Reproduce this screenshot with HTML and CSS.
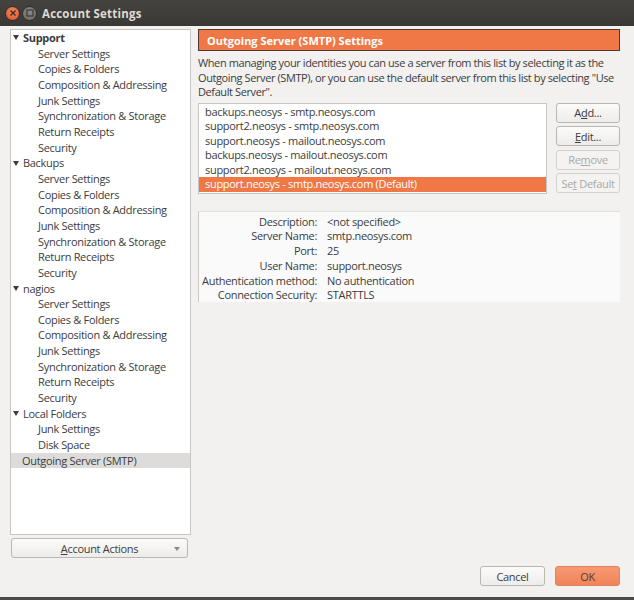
FILE: index.html
```html
<!DOCTYPE html>
<html>
<head>
<meta charset="utf-8">
<link rel="stylesheet" href="styles.css">
</head>
<body>
<div class="window">
  <div class="titlebar">
    <div class="wbtns">
      <span class="wb close"><svg width="8" height="8" viewBox="0 0 8 8"><path d="M1.5 1.5L6.5 6.5M6.5 1.5L1.5 6.5" stroke="#3a2a22" stroke-width="1.4"/></svg></span>
      <span class="wb max"><svg width="8" height="8" viewBox="0 0 8 8"><rect x="1" y="1" width="6" height="6" fill="none" stroke="#3a3935" stroke-width="1.2"/></svg></span>
    </div>
    <div class="title">Account Settings</div>
  </div>
  <div class="content">
    <div class="sidebar">
      <div class="tree">
        <div class="row top"><span class="tw"></span><b>Support</b></div>
        <div class="row sub">Server Settings</div>
        <div class="row sub">Copies &amp; Folders</div>
        <div class="row sub">Composition &amp; Addressing</div>
        <div class="row sub">Junk Settings</div>
        <div class="row sub">Synchronization &amp; Storage</div>
        <div class="row sub">Return Receipts</div>
        <div class="row sub">Security</div>
        <div class="row top"><span class="tw"></span>Backups</div>
        <div class="row sub">Server Settings</div>
        <div class="row sub">Copies &amp; Folders</div>
        <div class="row sub">Composition &amp; Addressing</div>
        <div class="row sub">Junk Settings</div>
        <div class="row sub">Synchronization &amp; Storage</div>
        <div class="row sub">Return Receipts</div>
        <div class="row sub">Security</div>
        <div class="row top"><span class="tw"></span>nagios</div>
        <div class="row sub">Server Settings</div>
        <div class="row sub">Copies &amp; Folders</div>
        <div class="row sub">Composition &amp; Addressing</div>
        <div class="row sub">Junk Settings</div>
        <div class="row sub">Synchronization &amp; Storage</div>
        <div class="row sub">Return Receipts</div>
        <div class="row sub">Security</div>
        <div class="row top"><span class="tw"></span>Local Folders</div>
        <div class="row sub">Junk Settings</div>
        <div class="row sub">Disk Space</div>
        <div class="row top sel">Outgoing Server (SMTP)</div>
      </div>
      <div class="btn actions"><span><u>A</u>ccount Actions</span><span class="dd"></span></div>
    </div>
    <div class="main">
      <div class="header">Outgoing Server (SMTP) Settings</div>
      <p class="desc">When managing your identities you can use a server from this list by selecting it as the<br>Outgoing Server (SMTP), or you can use the default server from this list by selecting "Use<br>Default Server".</p>
      <div class="listarea">
        <div class="list">
          <div class="item">backups.neosys - smtp.neosys.com</div>
          <div class="item">support2.neosys - smtp.neosys.com</div>
          <div class="item">support.neosys - mailout.neosys.com</div>
          <div class="item">backups.neosys - mailout.neosys.com</div>
          <div class="item">support2.neosys - mailout.neosys.com</div>
          <div class="item selitem">support.neosys - smtp.neosys.com (Default)</div>
        </div>
        <div class="sidebtns">
          <div class="btn"><span>A<u>d</u>d...</span></div>
          <div class="btn"><span><u>E</u>dit...</span></div>
          <div class="btn dis"><span>Re<u>m</u>ove</span></div>
          <div class="btn dis"><span>Se<u>t</u> Default</span></div>
        </div>
      </div>
      <div class="details">
        <div class="lbl">Description:</div><div class="val">&lt;not specified&gt;</div>
        <div class="lbl">Server Name:</div><div class="val">smtp.neosys.com</div>
        <div class="lbl">Port:</div><div class="val">25</div>
        <div class="lbl">User Name:</div><div class="val">support.neosys</div>
        <div class="lbl">Authentication method:</div><div class="val">No authentication</div>
        <div class="lbl">Connection Security:</div><div class="val">STARTTLS</div>
      </div>
    </div>
  </div>
  <div class="footer">
    <div class="btn fbtn">Cancel</div>
    <div class="btn fbtn ok">OK</div>
  </div>
</div>
</body>
</html>
```
FILE: styles.css
```css
html, body {
  margin: 0;
  padding: 0;
  background: #3a3a3a;
}
body {
  font-family: "Open Sans", "DejaVu Sans", sans-serif;
  font-size: 11px;
  letter-spacing: -0.3px;
  color: #3c3c3c;
}
.window {
  width: 634px;
  height: 597px;
  background: #f2f1f0;
  display: flex;
  flex-direction: column;
  border-bottom: 3px solid #4a4a48;
}
.titlebar {
  height: 26px;
  background: linear-gradient(#44433f, #393834);
  display: flex;
  align-items: center;
  flex-shrink: 0;
}
.wbtns {
  display: flex;
  gap: 2px;
  margin-left: 5px;
}
.wb {
  width: 13px;
  height: 13px;
  border-radius: 50%;
  display: flex;
  align-items: center;
  justify-content: center;
}
.wb.close {
  background: radial-gradient(circle at 50% 35%, #f58a5c, #d9532a);
  border: 1px solid #2f2e2a;
}
.wb.max {
  background: radial-gradient(circle at 50% 35%, #8a8985, #6a6965);
  border: 1px solid #2f2e2a;
}
.title {
  margin-left: 5px;
  color: #dfdbd2;
  font-weight: bold;
  font-size: 11.5px;
  letter-spacing: 0.2px;
}
.content {
  display: flex;
  padding: 3px 14px 0 10px;
  gap: 7px;
  flex: 1;
}
.sidebar {
  width: 181px;
  flex-shrink: 0;
  display: flex;
  flex-direction: column;
}
.tree {
  height: 506px;
  background: #fff;
  border: 1px solid #c8c6c2;
  padding-top: 0;
  box-sizing: border-box;
}
.row {
  height: 15.67px;
  line-height: 15.67px;
  white-space: nowrap;
  display: flex;
  align-items: center;
}
.row.top { padding-left: 2px; }
.row.sub { padding-left: 27px; }
.row.sel { background: #dddcdb; padding-left: 11px; }
.tw {
  width: 0;
  height: 0;
  border-left: 3.5px solid transparent;
  border-right: 3.5px solid transparent;
  border-top: 5px solid #3c3c3c;
  margin-right: 4px;
}
.btn {
  border: 1px solid #b9b7b3;
  border-radius: 3px;
  background: linear-gradient(#fbfbfa, #edecea);
  display: flex;
  align-items: center;
  justify-content: center;
  box-sizing: border-box;
  white-space: nowrap;
}
.actions {
  margin-top: 3px;
  margin-left: 1px;
  width: 177px;
  height: 20px;
  position: relative;
}
.dd {
  position: absolute;
  right: 7px;
  top: 8px;
  width: 0;
  height: 0;
  border-left: 3px solid transparent;
  border-right: 3px solid transparent;
  border-top: 4px solid #8a8a8a;
}
.main {
  flex: 1;
  min-width: 0;
  display: flex;
  flex-direction: column;
}
.header {
  height: 22px;
  background: #f07746;
  border: 1px solid #4a3a30;
  box-sizing: border-box;
  color: #fff;
  font-weight: bold;
  padding-left: 8px;
  display: flex;
  align-items: center;
  letter-spacing: 0;
}
.desc {
  margin: 5px 0 0 0;
  line-height: 14.5px;
  white-space: nowrap;
  letter-spacing: -0.4px;
}
.listarea {
  display: flex;
  gap: 9px;
  margin-top: 3px;
}
.list {
  width: 349px;
  height: 91px;
  background: #fff;
  border: 1px solid #c8c6c2;
  box-sizing: border-box;
  padding-top: 1px;
}
.item {
  height: 14.6px;
  line-height: 14.6px;
  padding-left: 6px;
  white-space: nowrap;
}
.selitem {
  background: #f07746;
  color: #fff;
}
.sidebtns {
  width: 64px;
  display: flex;
  flex-direction: column;
  gap: 3.5px;
}
.sidebtns .btn { height: 20px; }
.btn.dis { color: #a9a8a5; background: #f4f3f2; border-color: #d3d1cd; }
.details {
  margin-top: 17px;
  background: #fafafa;
  border-left: 1px solid #c8c6c2;
  border-top: 1px solid #e0dfdc;
  height: 91px;
  box-sizing: border-box;
  padding-top: 3px;
  display: grid;
  grid-template-columns: 118px 1fr;
  column-gap: 10px;
  grid-auto-rows: 14.8px;
  line-height: 14.8px;
}
.lbl { text-align: right; white-space: nowrap; }
.footer {
  display: flex;
  justify-content: flex-end;
  gap: 10px;
  padding: 0 14px 11px 0;
}
.fbtn {
  width: 65px;
  height: 20px;
}
.ok {
  background: linear-gradient(#f79a72, #f0835a);
  border-color: #e4825c;
  color: #5a3a2a;
}
```
